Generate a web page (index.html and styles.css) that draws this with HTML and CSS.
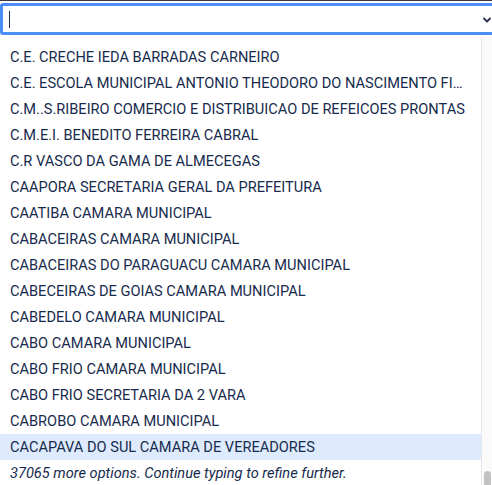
FILE: index.html
```html
<!DOCTYPE html>
<html lang="en">
<head>
    <meta charset="UTF-8">
    <meta name="viewport" content="width=device-width, initial-scale=1.0">
    <title>Organization picker</title>
    <link rel="stylesheet" href="styles.css">
</head>
<body>
    <div class="top-line"></div>
    <div class="picker">
        <div class="picker-input">
            <span class="caret"></span>
            <svg class="chevron" width="8" height="6" viewBox="0 0 8 6">
                <path d="M1 1.5 L4 4.5 L7 1.5" fill="none" stroke="#2a3350" stroke-width="1.8" stroke-linecap="round" stroke-linejoin="round"/>
            </svg>
        </div>
        <div class="menu">
            <ul class="options">
                <li>C.E. CRECHE IEDA BARRADAS CARNEIRO</li>
                <li>C.E. ESCOLA MUNICIPAL ANTONIO THEODORO DO NASCIMENTO FILHO</li>
                <li>C.M..S.RIBEIRO COMERCIO E DISTRIBUICAO DE REFEICOES PRONTAS</li>
                <li>C.M.E.I. BENEDITO FERREIRA CABRAL</li>
                <li>C.R VASCO DA GAMA DE ALMECEGAS</li>
                <li>CAAPORA SECRETARIA GERAL DA PREFEITURA</li>
                <li>CAATIBA CAMARA MUNICIPAL</li>
                <li>CABACEIRAS CAMARA MUNICIPAL</li>
                <li>CABACEIRAS DO PARAGUACU CAMARA MUNICIPAL</li>
                <li>CABECEIRAS DE GOIAS CAMARA MUNICIPAL</li>
                <li>CABEDELO CAMARA MUNICIPAL</li>
                <li>CABO CAMARA MUNICIPAL</li>
                <li>CABO FRIO CAMARA MUNICIPAL</li>
                <li>CABO FRIO SECRETARIA DA 2 VARA</li>
                <li>CABROBO CAMARA MUNICIPAL</li>
                <li class="active">CACAPAVA DO SUL CAMARA DE VEREADORES</li>
                <li class="more">37065 more options. Continue typing to refine further.</li>
            </ul>
            <div class="scrollbar">
                <div class="thumb"></div>
            </div>
        </div>
    </div>
</body>
</html>
```

FILE: styles.css
```css
html, body {
    margin: 0;
    padding: 0;
    background-color: white;
    overflow: hidden;
}
body {
    font-family: Roboto, 'Liberation Sans', Arial, sans-serif;
    font-size: 14.6px;
    color: #172b4d;
    width: 492px;
    height: 485px;
}
.top-line {
    height: 1px;
    background-color: #3a3a3a;
}
.picker {
    padding-top: 2px;
}
.picker-input {
    display: flex;
    align-items: center;
    justify-content: space-between;
    height: 26px;
    margin-right: -8px;
    padding: 0 6px 0 4px;
    border: 3px solid #4c8ef7;
    border-radius: 3px;
}
.caret {
    display: block;
    width: 1px;
    height: 17px;
    margin-left: 2px;
    background-color: #172b4d;
}
.chevron {
    display: block;
    margin-top: 1px;
}
.menu {
    display: flex;
    margin-top: 2px;
    height: 448px;
}
.options {
    flex: 1;
    list-style: none;
    margin: 0;
    padding: 7px 0 0 0;
    min-width: 0;
}
.options li {
    height: 26px;
    line-height: 26px;
    padding: 0 12px 0 10px;
    white-space: nowrap;
    overflow: hidden;
    text-overflow: ellipsis;
}
.options li.active {
    background-color: #deebff;
}
.options li.more {
    font-style: italic;
}
.scrollbar {
    width: 10px;
    border-left: 1px solid #e6e6e6;
    background-color: #fafafa;
    display: flex;
    flex-direction: column;
    justify-content: flex-end;
    align-items: center;
}
.thumb {
    width: 7px;
    height: 16px;
    margin-bottom: -2px;
    border-radius: 4px;
    background-color: #c2c2c2;
}
```
